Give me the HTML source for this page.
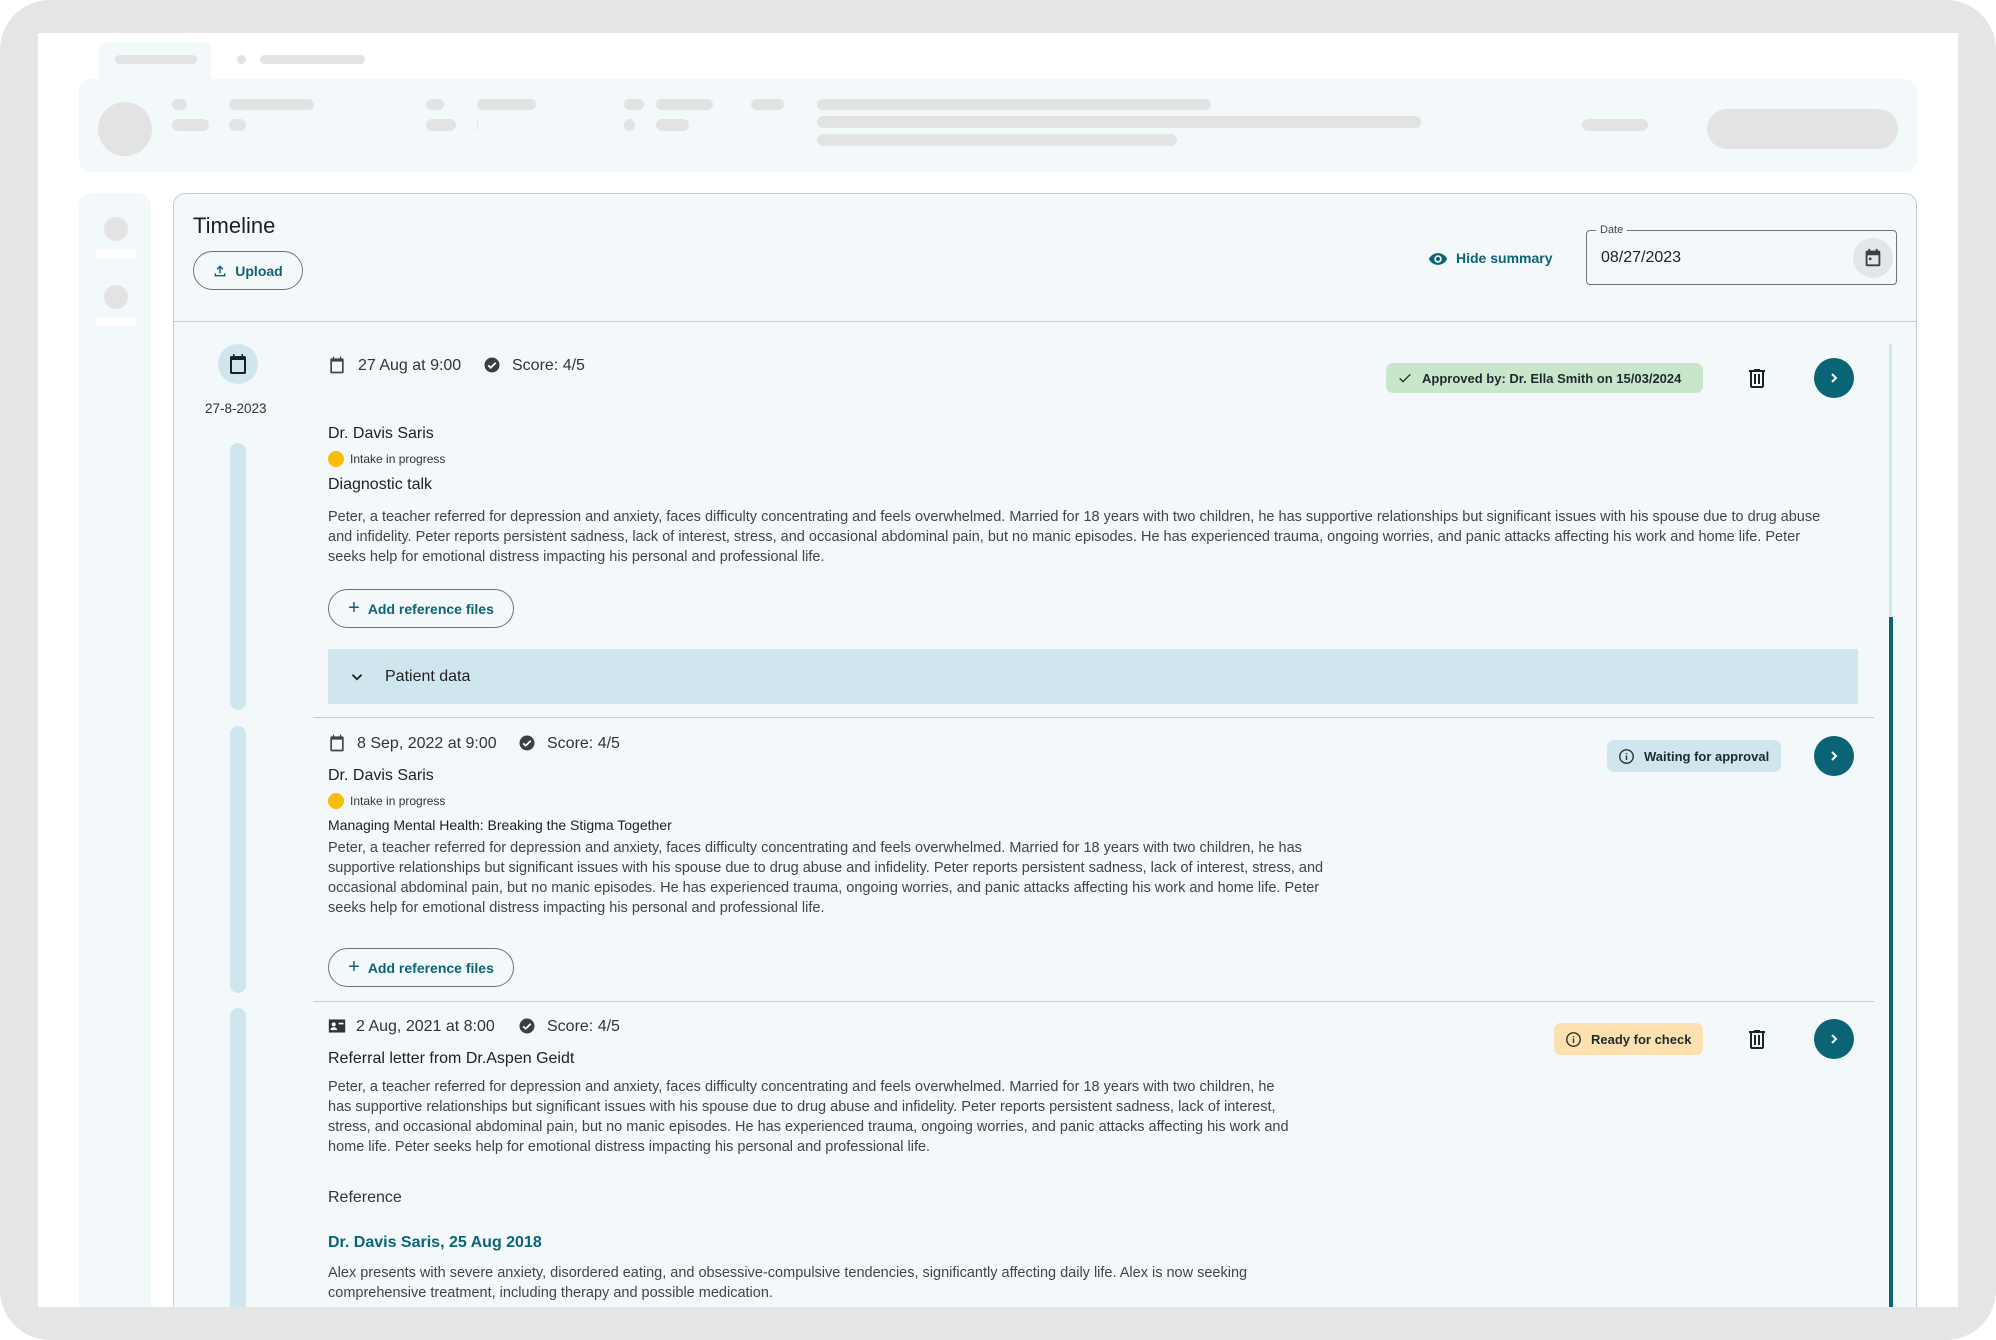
<!DOCTYPE html>
<html><head><meta charset="utf-8"><style>
*{box-sizing:border-box;margin:0;padding:0}
body{width:1996px;height:1340px;background:#fff;position:relative;overflow:hidden;font-family:"Liberation Sans",sans-serif;color:#1f1f1f}
.a{position:absolute}
.sk{position:absolute;background:#e3e3e3;border-radius:6px}
.t{position:absolute;white-space:nowrap}
.p{position:absolute;white-space:nowrap;font-size:14.5px;line-height:20px;color:#444}
.btn{position:absolute;border:1px solid #6f7477;border-radius:20px;color:#0b6476;font-size:14px;font-weight:bold;display:flex;align-items:center;justify-content:center;gap:8px}
.badge{position:absolute;border-radius:7px;font-size:13px;font-weight:bold;display:flex;align-items:center;gap:9px;padding-left:11px;color:#1d2a30}
.arrow{position:absolute;width:40px;height:40px;border-radius:50%;background:#0b6476}
.bar{position:absolute;left:230px;width:16px;background:#cfe6ef;border-radius:8px}
.sep{position:absolute;left:313px;width:1561px;height:1px;background:#c6cbcf}
</style></head><body>
<div class="a" style="left:0;top:0;width:1996px;height:1340px;background:#e5e5e5;border-radius:50px"></div>
<div class="a" style="left:38px;top:33px;width:1920px;height:1274px;background:#fff;overflow:hidden">
<div class="a" style="left:-38px;top:-33px;width:1996px;height:1340px">
<!-- tab -->
<div class="a" style="left:99px;top:42px;width:112px;height:40px;background:#f3f8fb;border-radius:8px 8px 0 0"></div>
<div class="sk" style="left:115px;top:55px;width:82px;height:9px"></div>
<div class="sk" style="left:237px;top:55px;width:9px;height:9px;border-radius:50%"></div>
<div class="sk" style="left:260px;top:55px;width:105px;height:9px"></div>
<!-- header -->
<div class="a" style="left:79px;top:79px;width:1838px;height:93px;background:#f3f8fb;border-radius:12px"></div>
<div class="sk" style="left:98px;top:102px;width:54px;height:54px;border-radius:50%"></div>
<div class="sk" style="left:172px;top:99px;width:15px;height:11px"></div>
<div class="sk" style="left:229px;top:99px;width:85px;height:11px"></div>
<div class="sk" style="left:426px;top:99px;width:18px;height:11px"></div>
<div class="sk" style="left:477px;top:99px;width:59px;height:11px"></div>
<div class="sk" style="left:624px;top:99px;width:20px;height:11px"></div>
<div class="sk" style="left:656px;top:99px;width:57px;height:11px"></div>
<div class="sk" style="left:751px;top:99px;width:33px;height:11px"></div>
<div class="sk" style="left:817px;top:99px;width:394px;height:11px"></div>
<div class="sk" style="left:172px;top:119px;width:37px;height:12px"></div>
<div class="sk" style="left:229px;top:119px;width:17px;height:12px"></div>
<div class="sk" style="left:426px;top:119px;width:30px;height:12px"></div>
<div class="sk" style="left:477px;top:120px;width:1px;height:10px"></div>
<div class="sk" style="left:624px;top:119px;width:11px;height:12px"></div>
<div class="sk" style="left:656px;top:119px;width:33px;height:12px"></div>
<div class="sk" style="left:817px;top:116px;width:604px;height:12px"></div>
<div class="sk" style="left:817px;top:134px;width:360px;height:12px"></div>
<div class="sk" style="left:1582px;top:119px;width:66px;height:12px"></div>
<div class="sk" style="left:1707px;top:109px;width:191px;height:40px;border-radius:20px"></div>
<!-- sidebar -->
<div class="a" style="left:79px;top:193px;width:72px;height:1150px;background:#f3f8fb;border-radius:12px 12px 0 0"></div>
<div class="sk" style="left:104px;top:217px;width:24px;height:24px;border-radius:50%"></div>
<div class="a" style="left:95px;top:249px;width:42px;height:9px;background:#fff;border-radius:5px"></div>
<div class="sk" style="left:104px;top:285px;width:24px;height:24px;border-radius:50%"></div>
<div class="a" style="left:95px;top:317px;width:42px;height:9px;background:#fff;border-radius:5px"></div>
<!-- main card -->
<div class="a" style="left:173px;top:193px;width:1744px;height:1170px;background:#f3f8fb;border:1px solid #c6cbcf;border-radius:12px"></div>
<div class="t" style="left:193px;top:213px;font-size:22px;color:#1f1f1f">Timeline</div>
<div class="btn" style="left:193px;top:251px;width:110px;height:39px">
<svg width="14" height="14" viewBox="0 0 24 24"><path d="M12 16V4M7 9l5-5 5 5M4 16v4h16v-4" fill="none" stroke="#0b6476" stroke-width="2.4"/></svg>Upload</div>
<svg class="a" style="left:1428px;top:249px" width="20" height="20" viewBox="0 0 24 24"><path d="M12 5C7 5 2.7 8.1 1 12c1.7 3.9 6 7 11 7s9.3-3.1 11-7c-1.7-3.9-6-7-11-7zm0 11.5a4.5 4.5 0 110-9 4.5 4.5 0 010 9zm0-7a2.5 2.5 0 100 5 2.5 2.5 0 000-5z" fill="#0b6476"/></svg>
<div class="t" style="left:1456px;top:250px;font-size:14px;font-weight:bold;color:#0b6476">Hide summary</div>
<div class="a" style="left:1586px;top:230px;width:311px;height:55px;border:1px solid #6f7477;border-radius:4px"></div>
<div class="t" style="left:1596px;top:224px;font-size:11px;color:#444;background:#f3f8fb;padding:0 4px">Date</div>
<div class="t" style="left:1601px;top:249px;font-size:16px;color:#1f1f1f">08/27/2023</div>
<div class="a" style="left:1853px;top:238px;width:40px;height:40px;border-radius:50%;background:#e3e6e8"></div>
<svg class="a" style="left:1862px;top:247px" width="22" height="22" viewBox="0 0 24 24"><path d="M7 2v2H5.5C4.7 4 4 4.7 4 5.5v14c0 .8.7 1.5 1.5 1.5h13c.8 0 1.5-.7 1.5-1.5v-14c0-.8-.7-1.5-1.5-1.5H17V2h-2v2H9V2H7zM6 9h12v10H6V9z" fill="#3a3f42"/><circle cx="9" cy="13" r="1.5" fill="#3a3f42"/></svg>
<div class="a" style="left:173px;top:321px;width:1744px;height:1px;background:#c6cbcf"></div>

<!-- timeline left -->
<div class="a" style="left:218px;top:344px;width:40px;height:40px;border-radius:50%;background:#cfe6ef"></div>
<svg class="a" style="left:226px;top:352px" width="24" height="24" viewBox="0 0 24 24"><path d="M7 2v2H5.5C4.7 4 4 4.7 4 5.5v15c0 .8.7 1.5 1.5 1.5h13c.8 0 1.5-.7 1.5-1.5v-15c0-.8-.7-1.5-1.5-1.5H17V2h-1.5v2h-7V2H7zM6 8h12v12H6V8z" fill="#15222a"/></svg>
<div class="t" style="left:205px;top:401px;font-size:13.5px;color:#333">27-8-2023</div>
<div class="bar" style="top:443px;height:267px"></div>
<div class="bar" style="top:726px;height:267px"></div>
<div class="bar" style="top:1008px;height:340px"></div>
<!-- scroll -->
<div class="a" style="left:1889px;top:344px;width:3px;height:273px;background:#cfe6ef"></div>
<div class="a" style="left:1889px;top:617px;width:4px;height:730px;background:#0b6476"></div>

<!-- Row 1 -->
<svg class="a" style="left:327px;top:355px" width="20" height="20" viewBox="0 0 24 24"><path d="M7 2v2H5.5C4.7 4 4 4.7 4 5.5v15c0 .8.7 1.5 1.5 1.5h13c.8 0 1.5-.7 1.5-1.5v-15c0-.8-.7-1.5-1.5-1.5H17V2h-1.5v2h-7V2H7zM6 8h12v12H6V8z" fill="#444"/></svg>
<div class="t" style="left:358px;top:357px;font-size:16px;color:#333">27 Aug at 9:00</div>
<svg class="a" style="left:483px;top:356px" width="18" height="18" viewBox="0 0 24 24"><circle cx="12" cy="12" r="10" fill="#3a3f42"/><path d="M7 12.5l3.2 3.2L17 9" fill="none" stroke="#fff" stroke-width="2.4"/></svg>
<div class="t" style="left:512px;top:357px;font-size:16px;color:#333">Score: 4/5</div>
<div class="badge" style="left:1386px;top:363px;width:317px;height:30px;background:#c8e6c9"><svg width="16" height="16" viewBox="0 0 24 24"><path d="M4 12.5l5 5L20 6.5" fill="none" stroke="#1d2a30" stroke-width="2"/></svg>Approved by: Dr. Ella Smith on 15/03/2024</div>
<svg class="a" style="left:1745px;top:366px" width="24" height="24" viewBox="0 0 24 24"><path d="M9 3v1H4v2h1v14c0 1.1.9 2 2 2h10c1.1 0 2-.9 2-2V6h1V4h-5V3H9zM7 6h10v14H7V6zm2 2v10h2V8H9zm4 0v10h2V8h-2z" fill="#15222a"/></svg>
<div class="arrow" style="left:1814px;top:358px"></div>
<svg class="a" style="left:1826px;top:370px" width="16" height="16" viewBox="0 0 24 24"><path d="M9 6l6 6-6 6" fill="none" stroke="#fff" stroke-width="3"/></svg>
<div class="t" style="left:328px;top:425px;font-size:16px;color:#1f1f1f">Dr. Davis Saris</div>
<div class="a" style="left:328px;top:451px;width:16px;height:16px;border-radius:50%;background:#fbbc05"></div>
<div class="t" style="left:350px;top:452px;font-size:12px;color:#333">Intake in progress</div>
<div class="t" style="left:328px;top:476px;font-size:16px;color:#1f1f1f">Diagnostic talk</div>
<div class="p" style="left:328px;top:507px">Peter, a teacher referred for depression and anxiety, faces difficulty concentrating and feels overwhelmed. Married for 18 years with two children, he has supportive relationships but significant issues with his spouse due to drug abuse<br>and infidelity. Peter reports persistent sadness, lack of interest, stress, and occasional abdominal pain, but no manic episodes. He has experienced trauma, ongoing worries, and panic attacks affecting his work and home life. Peter<br>seeks help for emotional distress impacting his personal and professional life.</div>
<div class="btn" style="left:328px;top:589px;width:186px;height:39px"><span style="font-size:20px;font-weight:normal">+</span>Add reference files</div>
<div class="a" style="left:328px;top:649px;width:1530px;height:55px;background:#cfe6ef"></div>
<svg class="a" style="left:348px;top:668px" width="18" height="18" viewBox="0 0 24 24"><path d="M6 9l6 6 6-6" fill="none" stroke="#1f1f1f" stroke-width="2.4"/></svg>
<div class="t" style="left:385px;top:668px;font-size:16px;color:#1f1f1f">Patient data</div>
<div class="sep" style="top:717px"></div>

<!-- Row 2 -->
<svg class="a" style="left:327px;top:733px" width="20" height="20" viewBox="0 0 24 24"><path d="M7 2v2H5.5C4.7 4 4 4.7 4 5.5v15c0 .8.7 1.5 1.5 1.5h13c.8 0 1.5-.7 1.5-1.5v-15c0-.8-.7-1.5-1.5-1.5H17V2h-1.5v2h-7V2H7zM6 8h12v12H6V8z" fill="#444"/></svg>
<div class="t" style="left:357px;top:735px;font-size:16px;color:#333">8 Sep, 2022 at 9:00</div>
<svg class="a" style="left:518px;top:734px" width="18" height="18" viewBox="0 0 24 24"><circle cx="12" cy="12" r="10" fill="#3a3f42"/><path d="M7 12.5l3.2 3.2L17 9" fill="none" stroke="#fff" stroke-width="2.4"/></svg>
<div class="t" style="left:547px;top:735px;font-size:16px;color:#333">Score: 4/5</div>
<div class="badge" style="left:1607px;top:740px;width:174px;height:32px;background:#cfe6ef"><svg width="17" height="17" viewBox="0 0 24 24"><circle cx="12" cy="12" r="9.5" fill="none" stroke="#333" stroke-width="2"/><path d="M12 10.5v6.5M12 7v1.8" stroke="#333" stroke-width="2"/></svg>Waiting for approval</div>
<div class="arrow" style="left:1814px;top:736px"></div>
<svg class="a" style="left:1826px;top:748px" width="16" height="16" viewBox="0 0 24 24"><path d="M9 6l6 6-6 6" fill="none" stroke="#fff" stroke-width="3"/></svg>
<div class="t" style="left:328px;top:767px;font-size:16px;color:#1f1f1f">Dr. Davis Saris</div>
<div class="a" style="left:328px;top:793px;width:16px;height:16px;border-radius:50%;background:#fbbc05"></div>
<div class="t" style="left:350px;top:794px;font-size:12px;color:#333">Intake in progress</div>
<div class="t" style="left:328px;top:817px;font-size:14px;color:#1f1f1f">Managing Mental Health: Breaking the Stigma Together</div>
<div class="p" style="left:328px;top:838px">Peter, a teacher referred for depression and anxiety, faces difficulty concentrating and feels overwhelmed. Married for 18 years with two children, he has<br>supportive relationships but significant issues with his spouse due to drug abuse and infidelity. Peter reports persistent sadness, lack of interest, stress, and<br>occasional abdominal pain, but no manic episodes. He has experienced trauma, ongoing worries, and panic attacks affecting his work and home life. Peter<br>seeks help for emotional distress impacting his personal and professional life.</div>
<div class="btn" style="left:328px;top:948px;width:186px;height:39px"><span style="font-size:20px;font-weight:normal">+</span>Add reference files</div>
<div class="sep" style="top:1001px"></div>

<!-- Row 3 -->
<svg class="a" style="left:327px;top:1017px" width="20" height="18" viewBox="0 0 24 22"><rect x="2" y="3" width="20" height="16" fill="#333"/><circle cx="8" cy="9" r="2.5" fill="#fff"/><path d="M4 16c0-2.5 2-3.5 4-3.5s4 1 4 3.5z" fill="#fff"/><rect x="14" y="7" width="6" height="2" fill="#fff"/></svg>
<div class="t" style="left:356px;top:1018px;font-size:16px;color:#333">2 Aug, 2021 at 8:00</div>
<svg class="a" style="left:518px;top:1017px" width="18" height="18" viewBox="0 0 24 24"><circle cx="12" cy="12" r="10" fill="#3a3f42"/><path d="M7 12.5l3.2 3.2L17 9" fill="none" stroke="#fff" stroke-width="2.4"/></svg>
<div class="t" style="left:547px;top:1018px;font-size:16px;color:#333">Score: 4/5</div>
<div class="badge" style="left:1554px;top:1023px;width:149px;height:32px;background:#fde0b0"><svg width="17" height="17" viewBox="0 0 24 24"><circle cx="12" cy="12" r="9.5" fill="none" stroke="#333" stroke-width="2"/><path d="M12 10.5v6.5M12 7v1.8" stroke="#333" stroke-width="2"/></svg>Ready for check</div>
<svg class="a" style="left:1745px;top:1027px" width="24" height="24" viewBox="0 0 24 24"><path d="M9 3v1H4v2h1v14c0 1.1.9 2 2 2h10c1.1 0 2-.9 2-2V6h1V4h-5V3H9zM7 6h10v14H7V6zm2 2v10h2V8H9zm4 0v10h2V8h-2z" fill="#15222a"/></svg>
<div class="arrow" style="left:1814px;top:1019px"></div>
<svg class="a" style="left:1826px;top:1031px" width="16" height="16" viewBox="0 0 24 24"><path d="M9 6l6 6-6 6" fill="none" stroke="#fff" stroke-width="3"/></svg>
<div class="t" style="left:328px;top:1050px;font-size:16px;color:#1f1f1f">Referral letter from Dr.Aspen Geidt</div>
<div class="p" style="left:328px;top:1077px">Peter, a teacher referred for depression and anxiety, faces difficulty concentrating and feels overwhelmed. Married for 18 years with two children, he<br>has supportive relationships but significant issues with his spouse due to drug abuse and infidelity. Peter reports persistent sadness, lack of interest,<br>stress, and occasional abdominal pain, but no manic episodes. He has experienced trauma, ongoing worries, and panic attacks affecting his work and<br>home life. Peter seeks help for emotional distress impacting his personal and professional life.</div>
<div class="t" style="left:328px;top:1189px;font-size:16px;color:#333">Reference</div>
<div class="t" style="left:328px;top:1234px;font-size:16px;font-weight:bold;color:#0b6476">Dr. Davis Saris, 25 Aug 2018</div>
<div class="p" style="left:328px;top:1263px">Alex presents with severe anxiety, disordered eating, and obsessive-compulsive tendencies, significantly affecting daily life. Alex is now seeking<br>comprehensive treatment, including therapy and possible medication.</div>
</div>
</div>
</body></html>
